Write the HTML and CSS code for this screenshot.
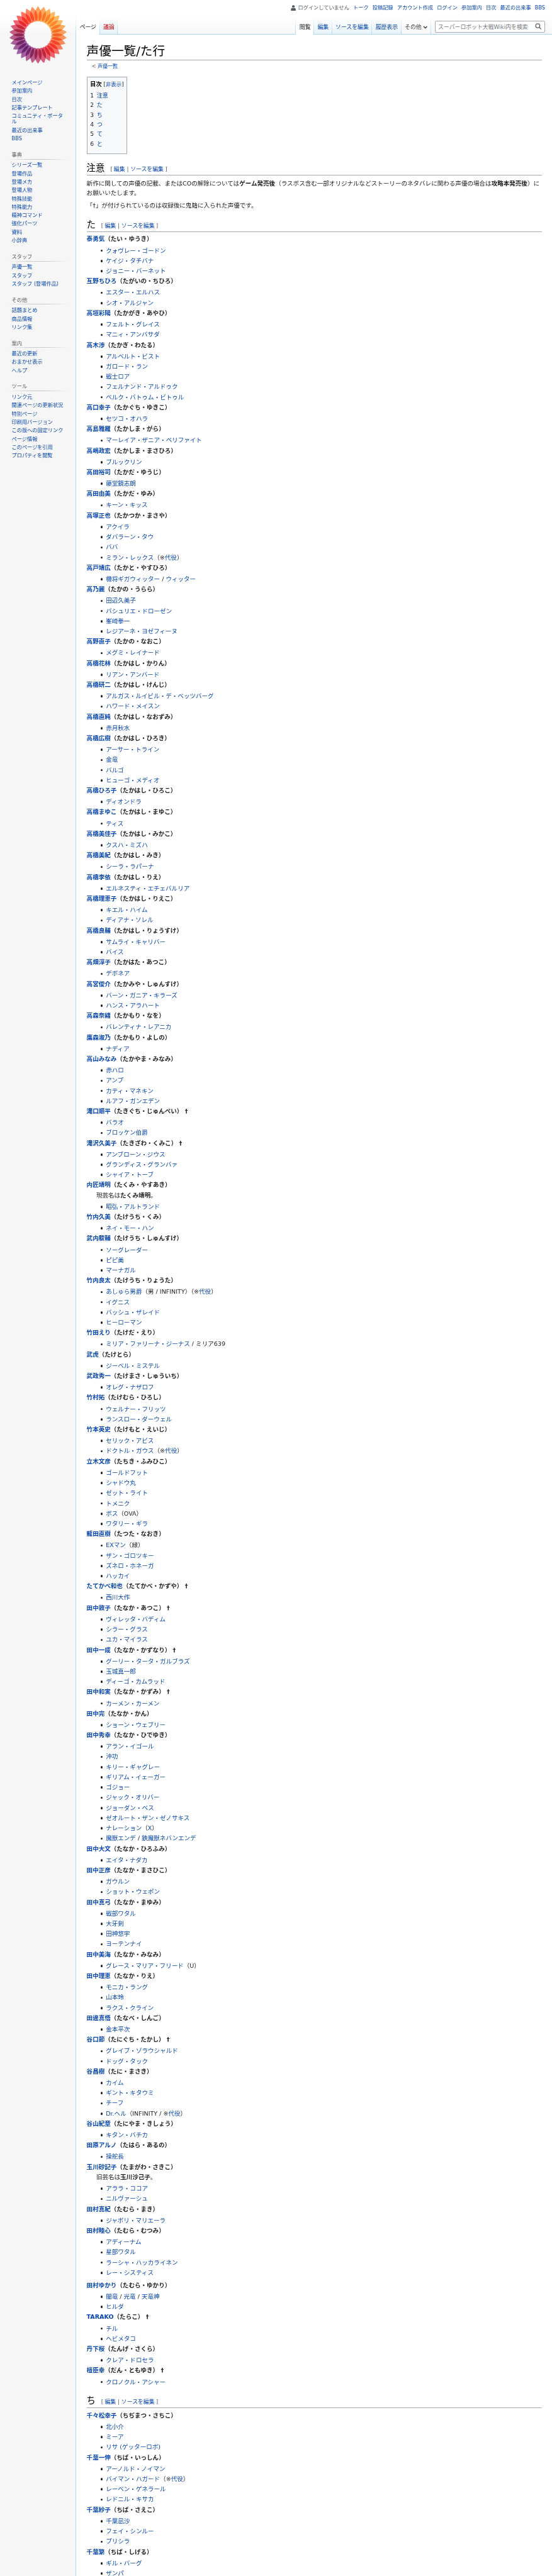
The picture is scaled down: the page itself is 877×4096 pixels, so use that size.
FILE: index.html
```html
<!DOCTYPE html>
<html lang="ja">
<head>
  <meta charset="UTF-8" />
  <meta name="viewport" content="width=device-width, initial-scale=1" />
  <title>声優一覧/た行</title>
  <link rel="stylesheet" href="styles.css">
</head>
<body>
<div class="page">

  <aside class="sidebar">
    <a class="logo" href="#" aria-label="メインページ">
      <svg viewBox="-68 -68 136 136">
        <defs>
          <path id="petal" d="M0 -67C7 -58 9.5 -50 8 -42C7 -36 4 -31 0 -31C-4 -31 -7 -36 -8 -42C-9.5 -50 -7 -58 0 -67Z" />
        </defs>
        <g class="petals">
          <use href="#petal" fill="#ff7a1a" />
          <use href="#petal" fill="#ff8519" transform="rotate(12)" />
          <use href="#petal" fill="#ff901c" transform="rotate(24)" />
          <use href="#petal" fill="#ff9b20" transform="rotate(36)" />
          <use href="#petal" fill="#ffa024" transform="rotate(48)" />
          <use href="#petal" fill="#ff9d22" transform="rotate(60)" />
          <use href="#petal" fill="#ff8d20" transform="rotate(72)" />
          <use href="#petal" fill="#ff7f20" transform="rotate(84)" />
          <use href="#petal" fill="#ff7220" transform="rotate(96)" />
          <use href="#petal" fill="#ff6020" transform="rotate(108)" />
          <use href="#petal" fill="#ff4a22" transform="rotate(120)" />
          <use href="#petal" fill="#fb3528" transform="rotate(132)" />
          <use href="#petal" fill="#f4262c" transform="rotate(144)" />
          <use href="#petal" fill="#e62038" transform="rotate(156)" />
          <use href="#petal" fill="#d02048" transform="rotate(168)" />
          <use href="#petal" fill="#bd1f56" transform="rotate(180)" />
          <use href="#petal" fill="#a81f66" transform="rotate(192)" />
          <use href="#petal" fill="#962077" transform="rotate(204)" />
          <use href="#petal" fill="#862086" transform="rotate(216)" />
          <use href="#petal" fill="#80208a" transform="rotate(228)" />
          <use href="#petal" fill="#862082" transform="rotate(240)" />
          <use href="#petal" fill="#922076" transform="rotate(252)" />
          <use href="#petal" fill="#a12068" transform="rotate(264)" />
          <use href="#petal" fill="#b5205a" transform="rotate(276)" />
          <use href="#petal" fill="#cf204a" transform="rotate(288)" />
          <use href="#petal" fill="#ea2238" transform="rotate(300)" />
          <use href="#petal" fill="#fb2a28" transform="rotate(312)" />
          <use href="#petal" fill="#ff3a22" transform="rotate(324)" />
          <use href="#petal" fill="#ff501e" transform="rotate(336)" />
          <use href="#petal" fill="#ff661c" transform="rotate(348)" />
        </g>
      </svg>
    </a>

    <nav class="portal">
      <ul>
        <li><a href="#">メインページ</a></li>
        <li><a href="#">参加案内</a></li>
        <li><a href="#">目次</a></li>
        <li><a href="#">記事テンプレート</a></li>
        <li><a href="#">コミュニティ・ポータル</a></li>
        <li><a href="#">最近の出来事</a></li>
        <li><a href="#">BBS</a></li>
      </ul>
    </nav>
    <nav class="portal">
      <h3>事典</h3>
      <ul>
        <li><a href="#">シリーズ一覧</a></li>
        <li><a href="#">登場作品</a></li>
        <li><a href="#">登場メカ</a></li>
        <li><a href="#">登場人物</a></li>
        <li><a href="#">特殊技能</a></li>
        <li><a href="#">特殊能力</a></li>
        <li><a href="#">精神コマンド</a></li>
        <li><a href="#">強化パーツ</a></li>
        <li><a href="#">資料</a></li>
        <li><a href="#">小辞典</a></li>
      </ul>
    </nav>
    <nav class="portal">
      <h3>スタッフ</h3>
      <ul>
        <li><a href="#">声優一覧</a></li>
        <li><a href="#">スタッフ</a></li>
        <li><a href="#">スタッフ (登場作品)</a></li>
      </ul>
    </nav>
    <nav class="portal">
      <h3>その他</h3>
      <ul>
        <li><a href="#">話題まとめ</a></li>
        <li><a href="#">商品情報</a></li>
        <li><a href="#">リンク集</a></li>
      </ul>
    </nav>
    <nav class="portal">
      <h3>案内</h3>
      <ul>
        <li><a href="#">最近の更新</a></li>
        <li><a href="#">おまかせ表示</a></li>
        <li><a href="#">ヘルプ</a></li>
      </ul>
    </nav>
    <nav class="portal">
      <h3>ツール</h3>
      <ul>
        <li><a href="#">リンク元</a></li>
        <li><a href="#">関連ページの更新状況</a></li>
        <li><a href="#">特別ページ</a></li>
        <li><a href="#">印刷用バージョン</a></li>
        <li><a href="#">この版への固定リンク</a></li>
        <li><a href="#">ページ情報</a></li>
        <li><a href="#">このページを引用</a></li>
        <li><a href="#">プロパティを閲覧</a></li>
      </ul>
    </nav>
  </aside>

  <div class="main">
    <header class="head">
      <ul class="personal">
        <li class="anon">
          <svg viewBox="0 0 12 14"><circle cx="6" cy="3.4" r="3.2" /><path d="M3.4 6.6C1.2 7 .3 8.6.3 10.5V13.6H11.7V10.5C11.7 8.6 10.8 7 8.6 6.6C7 7.8 5 7.8 3.4 6.6Z" /></svg>
          ログインしていません
        </li>
        <li><a href="#">トーク</a></li>
        <li><a href="#">投稿記録</a></li>
        <li><a href="#">アカウント作成</a></li>
        <li><a href="#">ログイン</a></li>
        <li><a href="#">参加案内</a></li>
        <li><a href="#">目次</a></li>
        <li><a href="#">最近の出来事</a></li>
        <li><a href="#">BBS</a></li>
      </ul>
      <div class="tabs">
        <ul class="tab-list">
          <li class="selected"><a href="#">ページ</a></li>
          <li><a class="new" href="#">議論</a></li>
        </ul>
        <ul class="tab-list views">
          <li class="selected"><a href="#">閲覧</a></li>
          <li><a href="#">編集</a></li>
          <li><a href="#">ソースを編集</a></li>
          <li><a href="#">履歴表示</a></li>
          <li class="more"><span>その他</span><svg viewBox="0 0 12 8"><path d="M1.5 1.5L6 6L10.5 1.5" /></svg></li>
        </ul>
        <div class="search">
          <span>スーパーロボット大戦Wiki内を検索</span>
          <svg viewBox="0 0 16 16"><circle cx="6.7" cy="6.2" r="5" /><path d="M10.3 9.8L15 14.6" /></svg>
        </div>
      </div>
    </header>

    <main class="content">
      <h1>声優一覧/た行</h1>
      <div class="body">
        <div class="subpages">&lt; <a href="#">声優一覧</a></div>

        <div class="toc">
          <div class="toc-title"><b>目次</b> <span class="toggle">[<a href="#">非表示</a>]</span></div>
          <ul>
            <li><span>1</span><a href="#">注意</a></li>
            <li><span>2</span><a href="#">た</a></li>
            <li><span>3</span><a href="#">ち</a></li>
            <li><span>4</span><a href="#">つ</a></li>
            <li><span>5</span><a href="#">て</a></li>
            <li><span>6</span><a href="#">と</a></li>
          </ul>
        </div>

        <h2>注意<span class="edit"><i>[</i><a href="#">編集</a> | <a href="#">ソースを編集</a><i>]</i></span></h2>
        <p>新作に関しての声優の記載、またはCOの解除については<b>ゲーム発売後</b>（ラスボス含む一部オリジナルなどストーリーのネタバレに関わる声優の場合は<b>攻略本発売後</b>）にお願いいたします。</p>
        <p>「†」が付けられているのは収録後に鬼籍に入られた声優です。</p>

        <h2>た<span class="edit"><i>[</i><a href="#">編集</a> | <a href="#">ソースを編集</a><i>]</i></span></h2>
        <dl>
          <dt><a href="#">泰勇気</a>（たい・ゆうき）</dt>
          <dd><ul>
            <li><a href="#">クォヴレー・ゴードン</a></li>
            <li><a href="#">ケイジ・タチバナ</a></li>
            <li><a href="#">ジョニー・バーネット</a></li>
          </ul></dd>
          <dt><a href="#">互野ちひろ</a>（たがいの・ちひろ）</dt>
          <dd><ul>
            <li><a href="#">エスター・エルハス</a></li>
            <li><a href="#">シオ・アルジャン</a></li>
          </ul></dd>
          <dt><a href="#">高垣彩陽</a>（たかがき・あやひ）</dt>
          <dd><ul>
            <li><a href="#">フェルト・グレイス</a></li>
            <li><a href="#">マニィ・アンバサダ</a></li>
          </ul></dd>
          <dt><a href="#">高木渉</a>（たかぎ・わたる）</dt>
          <dd><ul>
            <li><a href="#">アルベルト・ビスト</a></li>
            <li><a href="#">ガロード・ラン</a></li>
            <li><a href="#">戦士ロア</a></li>
            <li><a href="#">フェルナンド・アルドゥク</a></li>
            <li><a href="#">ベルク・バトゥム・ビトゥル</a></li>
          </ul></dd>
          <dt><a href="#">高口幸子</a>（たかぐち・ゆきこ）</dt>
          <dd><ul>
            <li><a href="#">セツコ・オハラ</a></li>
          </ul></dd>
          <dt><a href="#">高島雅羅</a>（たかしま・がら）</dt>
          <dd><ul>
            <li><a href="#">マーレイア・ザニア・ベリファイト</a></li>
          </ul></dd>
          <dt><a href="#">高嶋政宏</a>（たかしま・まさひろ）</dt>
          <dd><ul>
            <li><a href="#">ブルックリン</a></li>
          </ul></dd>
          <dt><a href="#">高田裕司</a>（たかだ・ゆうじ）</dt>
          <dd><ul>
            <li><a href="#">藤堂鏡志朗</a></li>
          </ul></dd>
          <dt><a href="#">高田由美</a>（たかだ・ゆみ）</dt>
          <dd><ul>
            <li><a href="#">キーン・キッス</a></li>
          </ul></dd>
          <dt><a href="#">高塚正也</a>（たかつか・まさや）</dt>
          <dd><ul>
            <li><a href="#">アクイラ</a></li>
            <li><a href="#">ダバラーン・タウ</a></li>
            <li><a href="#">ババ</a></li>
            <li><a href="#">ミラン・レックス</a>（※<a href="#">代役</a>）</li>
          </ul></dd>
          <dt><a href="#">高戸靖広</a>（たかと・やすひろ）</dt>
          <dd><ul>
            <li><a href="#">機将ギガウィッター</a> / <a href="#">ウィッター</a></li>
          </ul></dd>
          <dt><a href="#">高乃麗</a>（たかの・うらら）</dt>
          <dd><ul>
            <li><a href="#">田辺久美子</a></li>
            <li><a href="#">バシュリエ・ドローゼン</a></li>
            <li><a href="#">峯崎拳一</a></li>
            <li><a href="#">レジアーネ・ヨゼフィーヌ</a></li>
          </ul></dd>
          <dt><a href="#">高野直子</a>（たかの・なおこ）</dt>
          <dd><ul>
            <li><a href="#">メグミ・レイナード</a></li>
          </ul></dd>
          <dt><a href="#">高橋花林</a>（たかはし・かりん）</dt>
          <dd><ul>
            <li><a href="#">リアン・アンバード</a></li>
          </ul></dd>
          <dt><a href="#">高橋研二</a>（たかはし・けんじ）</dt>
          <dd><ul>
            <li><a href="#">アルガス・ルイビル・デ・ベッツバーグ</a></li>
            <li><a href="#">ハワード・メイスン</a></li>
          </ul></dd>
          <dt><a href="#">高橋直純</a>（たかはし・なおずみ）</dt>
          <dd><ul>
            <li><a href="#">赤月秋水</a></li>
          </ul></dd>
          <dt><a href="#">高橋広樹</a>（たかはし・ひろき）</dt>
          <dd><ul>
            <li><a href="#">アーサー・トライン</a></li>
            <li><a href="#">金竜</a></li>
            <li><a href="#">バルゴ</a></li>
            <li><a href="#">ヒューゴ・メディオ</a></li>
          </ul></dd>
          <dt><a href="#">高橋ひろ子</a>（たかはし・ひろこ）</dt>
          <dd><ul>
            <li><a href="#">ディオンドラ</a></li>
          </ul></dd>
          <dt><a href="#">高橋まゆこ</a>（たかはし・まゆこ）</dt>
          <dd><ul>
            <li><a href="#">ティス</a></li>
          </ul></dd>
          <dt><a href="#">高橋美佳子</a>（たかはし・みかこ）</dt>
          <dd><ul>
            <li><a href="#">クスハ・ミズハ</a></li>
          </ul></dd>
          <dt><a href="#">高橋美紀</a>（たかはし・みき）</dt>
          <dd><ul>
            <li><a href="#">シーラ・ラパーナ</a></li>
          </ul></dd>
          <dt><a href="#">高橋李依</a>（たかはし・りえ）</dt>
          <dd><ul>
            <li><a href="#">エルネスティ・エチェバルリア</a></li>
          </ul></dd>
          <dt><a href="#">高橋理恵子</a>（たかはし・りえこ）</dt>
          <dd><ul>
            <li><a href="#">キエル・ハイム</a></li>
            <li><a href="#">ディアナ・ソレル</a></li>
          </ul></dd>
          <dt><a href="#">高橋良輔</a>（たかはし・りょうすけ）</dt>
          <dd><ul>
            <li><a href="#">サムライ・キャリバー</a></li>
            <li><a href="#">バイス</a></li>
          </ul></dd>
          <dt><a href="#">高畑淳子</a>（たかはた・あつこ）</dt>
          <dd><ul>
            <li><a href="#">デボネア</a></li>
          </ul></dd>
          <dt><a href="#">高宮俊介</a>（たかみや・しゅんすけ）</dt>
          <dd><ul>
            <li><a href="#">バーン・ガニア・キラーズ</a></li>
            <li><a href="#">ハンス・アラハート</a></li>
          </ul></dd>
          <dt><a href="#">高森奈緒</a>（たかもり・なを）</dt>
          <dd><ul>
            <li><a href="#">バレンティナ・レアニカ</a></li>
          </ul></dd>
          <dt><a href="#">鷹森淑乃</a>（たかもり・よしの）</dt>
          <dd><ul>
            <li><a href="#">ナディア</a></li>
          </ul></dd>
          <dt><a href="#">高山みなみ</a>（たかやま・みなみ）</dt>
          <dd><ul>
            <li><a href="#">赤ハロ</a></li>
            <li><a href="#">アンプ</a></li>
            <li><a href="#">カティ・マネキン</a></li>
            <li><a href="#">ルアフ・ガンエデン</a></li>
          </ul></dd>
          <dt><a href="#">滝口順平</a>（たきぐち・じゅんぺい） †</dt>
          <dd><ul>
            <li><a href="#">バラオ</a></li>
            <li><a href="#">ブロッケン伯爵</a></li>
          </ul></dd>
          <dt><a href="#">滝沢久美子</a>（たきざわ・くみこ） †</dt>
          <dd><ul>
            <li><a href="#">アンブローン・ジウス</a></li>
            <li><a href="#">グランディス・グランバァ</a></li>
            <li><a href="#">シャイア・トーブ</a></li>
          </ul></dd>
          <dt><a href="#">内匠靖明</a>（たくみ・やすあき）</dt>
          <dd>現芸名は<b>たくみ靖明</b>。</dd>
          <dd><ul>
            <li><a href="#">昭弘・アルトランド</a></li>
          </ul></dd>
          <dt><a href="#">竹内久美</a>（たけうち・くみ）</dt>
          <dd><ul>
            <li><a href="#">ネイ・モー・ハン</a></li>
          </ul></dd>
          <dt><a href="#">武内駿輔</a>（たけうち・しゅんすけ）</dt>
          <dd><ul>
            <li><a href="#">ソーグレーダー</a></li>
            <li><a href="#">ピピ美</a></li>
            <li><a href="#">マーナガル</a></li>
          </ul></dd>
          <dt><a href="#">竹内良太</a>（たけうち・りょうた）</dt>
          <dd><ul>
            <li><a href="#">あしゅら男爵</a>（男 / INFINITY）（※<a href="#">代役</a>）</li>
            <li><a href="#">イグニス</a></li>
            <li><a href="#">バッシュ・ザレイド</a></li>
            <li><a href="#">ヒーローマン</a></li>
          </ul></dd>
          <dt><a href="#">竹田えり</a>（たけだ・えり）</dt>
          <dd><ul>
            <li><a href="#">ミリア・ファリーナ・ジーナス</a> / ミリア639</li>
          </ul></dd>
          <dt><a href="#">武虎</a>（たけとら）</dt>
          <dd><ul>
            <li><a href="#">ジーベル・ミステル</a></li>
          </ul></dd>
          <dt><a href="#">武政秀一</a>（たけまさ・しゅういち）</dt>
          <dd><ul>
            <li><a href="#">オレグ・ナザロフ</a></li>
          </ul></dd>
          <dt><a href="#">竹村拓</a>（たけむら・ひろし）</dt>
          <dd><ul>
            <li><a href="#">ウェルナー・フリッツ</a></li>
            <li><a href="#">ランスロー・ダーウェル</a></li>
          </ul></dd>
          <dt><a href="#">竹本英史</a>（たけもと・えいじ）</dt>
          <dd><ul>
            <li><a href="#">セリック・アビス</a></li>
            <li><a href="#">ドクトル・ガウス</a>（※<a href="#">代役</a>）</li>
          </ul></dd>
          <dt><a href="#">立木文彦</a>（たちき・ふみひこ）</dt>
          <dd><ul>
            <li><a href="#">ゴールドフット</a></li>
            <li><a href="#">シャドウ丸</a></li>
            <li><a href="#">ゼット・ライト</a></li>
            <li><a href="#">トメニク</a></li>
            <li><a href="#">ボス</a>（OVA）</li>
            <li><a href="#">ワタリー・ギラ</a></li>
          </ul></dd>
          <dt><a href="#">龍田直樹</a>（たつた・なおき）</dt>
          <dd><ul>
            <li><a href="#">EXマン</a>（緑）</li>
            <li><a href="#">ザン・ゴロツキー</a></li>
            <li><a href="#">ズネロ・ホネーガ</a></li>
            <li><a href="#">ハッカイ</a></li>
          </ul></dd>
          <dt><a href="#">たてかべ和也</a>（たてかべ・かずや） †</dt>
          <dd><ul>
            <li><a href="#">西川大作</a></li>
          </ul></dd>
          <dt><a href="#">田中敦子</a>（たなか・あつこ） †</dt>
          <dd><ul>
            <li><a href="#">ヴィレッタ・バディム</a></li>
            <li><a href="#">シラー・グラス</a></li>
            <li><a href="#">ユカ・マイラス</a></li>
          </ul></dd>
          <dt><a href="#">田中一成</a>（たなか・かずなり） †</dt>
          <dd><ul>
            <li><a href="#">グーリー・タータ・ガルブラズ</a></li>
            <li><a href="#">玉城真一郎</a></li>
            <li><a href="#">ディーゴ・カムラッド</a></li>
          </ul></dd>
          <dt><a href="#">田中和実</a>（たなか・かずみ） †</dt>
          <dd><ul>
            <li><a href="#">カーメン・カーメン</a></li>
          </ul></dd>
          <dt><a href="#">田中完</a>（たなか・かん）</dt>
          <dd><ul>
            <li><a href="#">ショーン・ウェブリー</a></li>
          </ul></dd>
          <dt><a href="#">田中秀幸</a>（たなか・ひでゆき）</dt>
          <dd><ul>
            <li><a href="#">アラン・イゴール</a></li>
            <li><a href="#">沖功</a></li>
            <li><a href="#">キリー・ギャグレー</a></li>
            <li><a href="#">ギリアム・イェーガー</a></li>
            <li><a href="#">ゴジョー</a></li>
            <li><a href="#">ジャック・オリバー</a></li>
            <li><a href="#">ジョーダン・ベス</a></li>
            <li><a href="#">ゼオルート・ザン・ゼノサキス</a></li>
            <li><a href="#">ナレーション</a>（<a href="#">X</a>）</li>
            <li><a href="#">魔獣エンデ</a> / <a href="#">鉄魔獣ネバンエンデ</a></li>
          </ul></dd>
          <dt><a href="#">田中大文</a>（たなか・ひろふみ）</dt>
          <dd><ul>
            <li><a href="#">エイタ・ナダカ</a></li>
          </ul></dd>
          <dt><a href="#">田中正彦</a>（たなか・まさひこ）</dt>
          <dd><ul>
            <li><a href="#">ガウルン</a></li>
            <li><a href="#">ショット・ウェポン</a></li>
          </ul></dd>
          <dt><a href="#">田中真弓</a>（たなか・まゆみ）</dt>
          <dd><ul>
            <li><a href="#">戦部ワタル</a></li>
            <li><a href="#">大牙剣</a></li>
            <li><a href="#">田神悠宇</a></li>
            <li><a href="#">ヨーテンナイ</a></li>
          </ul></dd>
          <dt><a href="#">田中美海</a>（たなか・みなみ）</dt>
          <dd><ul>
            <li><a href="#">グレース・マリア・フリード</a>（U）</li>
          </ul></dd>
          <dt><a href="#">田中理恵</a>（たなか・りえ）</dt>
          <dd><ul>
            <li><a href="#">モニカ・ラング</a></li>
            <li><a href="#">山本玲</a></li>
            <li><a href="#">ラクス・クライン</a></li>
          </ul></dd>
          <dt><a href="#">田邊真悟</a>（たなべ・しんご）</dt>
          <dd><ul>
            <li><a href="#">金本平次</a></li>
          </ul></dd>
          <dt><a href="#">谷口節</a>（たにぐち・たかし） †</dt>
          <dd><ul>
            <li><a href="#">グレイブ・ゾラウシャルド</a></li>
            <li><a href="#">ドッグ・タック</a></li>
          </ul></dd>
          <dt><a href="#">谷昌樹</a>（たに・まさき）</dt>
          <dd><ul>
            <li><a href="#">カイム</a></li>
            <li><a href="#">ギント・キタウミ</a></li>
            <li><a href="#">チーフ</a></li>
            <li><a href="#">Dr.ヘル</a>（INFINITY / ※<a href="#">代役</a>）</li>
          </ul></dd>
          <dt><a href="#">谷山紀章</a>（たにやま・きしょう）</dt>
          <dd><ul>
            <li><a href="#">キタン・バチカ</a></li>
          </ul></dd>
          <dt><a href="#">田原アルノ</a>（たはら・あるの）</dt>
          <dd><ul>
            <li><a href="#">操舵長</a></li>
          </ul></dd>
          <dt><a href="#">玉川砂記子</a>（たまがわ・さきこ）</dt>
          <dd>旧芸名は<b>玉川沙己子</b>。</dd>
          <dd><ul>
            <li><a href="#">アララ・ココア</a></li>
            <li><a href="#">ニルヴァーシュ</a></li>
          </ul></dd>
          <dt><a href="#">田村真紀</a>（たむら・まき）</dt>
          <dd><ul>
            <li><a href="#">ジャボリ・マリエーラ</a></li>
          </ul></dd>
          <dt><a href="#">田村睦心</a>（たむら・むつみ）</dt>
          <dd><ul>
            <li><a href="#">アディーナム</a></li>
            <li><a href="#">星部ワタル</a></li>
            <li><a href="#">ラーシャ・ハッカライネン</a></li>
            <li><a href="#">レー・システィス</a></li>
          </ul></dd>
        </dl>
        <dl>
          <dt><a href="#">田村ゆかり</a>（たむら・ゆかり）</dt>
          <dd><ul>
            <li><a href="#">闇竜</a> / <a href="#">光竜</a> / <a href="#">天竜神</a></li>
            <li><a href="#">ヒルダ</a></li>
          </ul></dd>
          <dt><a href="#">TARAKO</a>（たらこ） †</dt>
          <dd><ul>
            <li><a href="#">チル</a></li>
            <li><a href="#">ヘビメタコ</a></li>
          </ul></dd>
          <dt><a href="#">丹下桜</a>（たんげ・さくら）</dt>
          <dd><ul>
            <li><a href="#">クレア・ドロセラ</a></li>
          </ul></dd>
          <dt><a href="#">檀臣幸</a>（だん・ともゆき） †</dt>
          <dd><ul>
            <li><a href="#">クロノクル・アシャー</a></li>
          </ul></dd>
        </dl>

        <h2>ち<span class="edit"><i>[</i><a href="#">編集</a> | <a href="#">ソースを編集</a><i>]</i></span></h2>
        <dl>
          <dt><a href="#">千々松幸子</a>（ちぢまつ・さちこ）</dt>
          <dd><ul>
            <li><a href="#">北小介</a></li>
            <li><a href="#">ミーア</a></li>
            <li><a href="#">リサ (ゲッターロボ)</a></li>
          </ul></dd>
          <dt><a href="#">千葉一伸</a>（ちば・いっしん）</dt>
          <dd><ul>
            <li><a href="#">アーノルド・ノイマン</a></li>
            <li><a href="#">バイマン・ハガード</a>（※<a href="#">代役</a>）</li>
            <li><a href="#">レーベン・ゲネラール</a></li>
            <li><a href="#">レドニル・キサカ</a></li>
          </ul></dd>
          <dt><a href="#">千葉紗子</a>（ちば・さえこ）</dt>
          <dd><ul>
            <li><a href="#">千葉凪沙</a></li>
            <li><a href="#">フェイ・シンルー</a></li>
            <li><a href="#">プリシラ</a></li>
          </ul></dd>
          <dt><a href="#">千葉繁</a>（ちば・しげる）</dt>
          <dd><ul>
            <li><a href="#">ギル・バーグ</a></li>
            <li><a href="#">ザンパ</a></li>
          </ul></dd>
        </dl>
      </div>
    </main>
  </div>

</div>
</body>
</html>
```
FILE: styles.css
```css
* {
  box-sizing: border-box;
  margin: 0;
  padding: 0;
}

html {
  font-size: 10.928px;
}

body {
  font-family: "DejaVu Sans", "Noto Sans CJK JP", sans-serif;
  background: #f6f6f6;
  color: #202122;
}

a {
  color: #0645ad;
  text-decoration: none;
}

ul {
  list-style: none;
}

.page {
  display: grid;
  grid-template-columns: 11rem 1fr;
  height: 4096px;
  overflow: hidden;
}

/* Sidebar */
.sidebar {
  padding-left: 0.5rem;
  background: linear-gradient(#fff 50%, #f6f6f6 100%) no-repeat 0 0 / 100% 5rem;
}

.logo {
  display: flex;
  align-items: center;
  justify-content: center;
  width: 10.1rem;
  height: 10.06rem;
  margin-bottom: 1.12rem;
}

.logo svg {
  width: 8.5rem;
  height: 8.5rem;
}

.petals use {
  fill-opacity: 0.7;
  mix-blend-mode: multiply;
}

.portal {
  width: 8.7rem;
  margin: 0 0 0.76rem 0.7rem;
}

.portal h3 {
  height: 1.64rem;
  padding: 0.56rem 0 0 0.5rem;
  color: #54595d;
  font-weight: normal;
  background: linear-gradient(to right, rgba(200, 204, 209, 0) 0, #c8ccd1 33%, #c8ccd1 66%, rgba(200, 204, 209, 0) 100%) no-repeat 0 100% / 100% 1px;
}

.portal h3,
.portal li {
  font-size: 0.75rem;
  line-height: 1.125;
}

.portal ul {
  padding: 0.25rem 0.4rem 0 0.5rem;
}

.portal li {
  padding: 0.25em 0;
}

/* Header */
.main {
  min-width: 0;
}

.head {
  display: flex;
  flex-direction: column;
  justify-content: space-between;
  height: 5rem;
  background:
    linear-gradient(#a7d7f9, #a7d7f9) no-repeat 0 100% / 100% 1px,
    linear-gradient(#fff 50%, #f6f6f6 100%);
}

.personal {
  display: flex;
  justify-content: flex-end;
  gap: 0.5625rem;
  padding: 0.75rem 1rem 0 0;
  font-size: 0.75rem;
  line-height: 1.1667;
  white-space: nowrap;
}

.anon {
  display: flex;
  gap: 0.3rem;
  color: #54595d;
}

.anon svg {
  width: 0.75rem;
  height: 0.85rem;
  fill: #54595d;
}

.tabs {
  display: flex;
  height: 2.5rem;
}

.tab-list {
  display: flex;
  font-size: 0.8125rem;
  line-height: 1.25;
  white-space: nowrap;
  border-left: 1px solid;
  border-image: linear-gradient(#fff, #a7d7f9) 1;
  border-width: 0 0 0 1px;
}

.tab-list li {
  padding: 1.25em 0.5rem 0;
  background:
    linear-gradient(#fff, #a7d7f9) no-repeat 100% 0 / 1px 100%,
    linear-gradient(to top, #a7d7f9 1px, #e8f2f8 1px, #fff 100%);
}

.tab-list .selected {
  background: linear-gradient(#fff, #a7d7f9) no-repeat 100% 0 / 1px 100%, #fff;
}

.tab-list .selected a {
  color: #202122;
}

.tab-list .new {
  color: #ba0000;
}

.views {
  margin-left: auto;
}

.tab-list .more {
  display: flex;
  gap: 0.25rem;
  background: linear-gradient(#fff, #a7d7f9) no-repeat 100% 0 / 1px 100%;
  color: #404244;
}

.more svg {
  width: 0.68rem;
  height: 1rem;
  fill: none;
  stroke: #202122;
  stroke-width: 2;
}

.search {
  display: flex;
  align-items: center;
  justify-content: space-between;
  width: 16.05rem;
  height: 1.8rem;
  margin: 0.5rem 1rem 0 0.5rem;
  padding: 0 0.4rem;
  border: 1px solid #a2a9b1;
  border-radius: 2px;
  background: #fff;
  color: #72777d;
  font-size: 0.8125rem;
  white-space: nowrap;
}

.search svg {
  width: 0.95rem;
  height: 0.95rem;
  fill: none;
  stroke: #404244;
  stroke-width: 1.7;
}

/* Article */
.content {
  min-height: 4100px;
  padding: 1.2rem 1.5rem 1.5rem;
  background: #fff;
  border-left: 1px solid #a7d7f9;
}

h1,
h2 {
  color: #000;
  font-weight: normal;
  line-height: 1.375;
  border-bottom: 1px solid #a2a9b1;
}

h1 {
  margin-bottom: 0.25em;
  font-size: 1.8rem;
}

.body {
  font-size: 0.875rem;
  line-height: 1.6;
}

.subpages {
  margin: 0 0 1.4em 1em;
  color: #54595d;
  font-size: 84%;
  line-height: 1.2;
}

.toc {
  display: table;
  padding: 0.4375rem;
  border: 1px solid #a2a9b1;
  background: #f8f9fa;
  font-size: 95%;
}

.toc-title b {
  color: #000;
}

.toggle {
  font-size: 94%;
}

.toc ul {
  margin: 0.3em 0;
}

.toc li {
  margin-bottom: 0.1em;
}

.toc li span {
  padding-right: 0.5em;
}

h2 {
  margin: 0.95em 0 0.25em;
  font-size: 1.5em;
}

.edit {
  margin-left: 1em;
  color: #54595d;
  font-size: 0.8125rem;
  line-height: 1;
}

.edit i {
  margin-right: 0.25em;
  font-style: normal;
}

.edit i:last-child {
  margin: 0 0 0 0.25em;
}

p {
  margin: 0.5em 0;
}

dl {
  margin: 0.2em 0 0.5em;
  line-height: 1.599;
}

dt {
  margin-bottom: 0.1em;
  font-weight: bold;
}

dd {
  margin: 0 0 0.1em 1.6em;
}

dd ul {
  margin: 0.3em 0 0 1.6em;
}

dd li {
  margin-bottom: 0.1em;
}

dd li::before {
  content: "";
  display: inline-block;
  width: 0.38em;
  height: 0.38em;
  margin: 0 0.5em 0 -0.88em;
  border-radius: 50%;
  background: #202122;
  vertical-align: 0.12em;
}
```
